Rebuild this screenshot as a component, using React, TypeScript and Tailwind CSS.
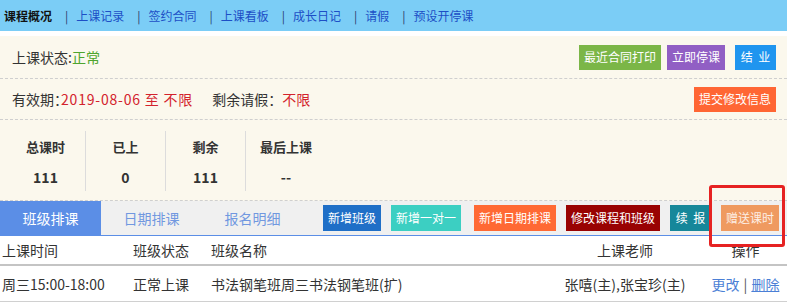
import React from 'react';

const navItems = ['上课记录', '签约合同', '上课看板', '成长日记', '请假', '预设开停课'];

const stats = [
    { label: '总课时', value: '111' },
    { label: '已上', value: '0' },
    { label: '剩余', value: '111' },
    { label: '最后上课', value: '--' },
];

export default function App() {
    return (
        <div className="relative w-[787px] h-[308px] bg-white overflow-hidden font-['Noto_Sans_CJK_SC',sans-serif] text-[14px] text-[#333]">
            {/* top nav */}
            <nav className="h-[31px] bg-[#7bcdf6] flex items-center pl-[4px] text-[12px] leading-none text-[#1d4fc6]">
                <span className="font-bold text-[#111]">课程概况</span>
                {navItems.map(item => (
                    <React.Fragment key={item}>
                        <span className="ml-[13px] mr-[8px] text-[#2b3a6b]">|</span>
                        <span>{item}</span>
                    </React.Fragment>
                ))}
            </nav>

            <div className="mt-[5px] bg-[#fbf8ed]">
                <div className="h-[43px] flex items-center justify-between pl-[12px] pr-[11px] border-b border-dashed border-[#cfcfcf]">
                    <div className="leading-none">
                        上课状态:<span className="text-[#4ea52e]">正常</span>
                    </div>
                    <div className="flex items-center text-[12px] text-white leading-none">
                        <span className="h-[25px] px-[5px] flex items-center bg-[#7bb647]">最近合同打印</span>
                        <span className="ml-[6px] h-[25px] px-[5px] flex items-center bg-[#915fc4]">立即停课</span>
                        <span className="ml-[10px] h-[25px] w-[41px] flex items-center justify-center bg-[#1f95ef]">结&nbsp;&nbsp;业</span>
                    </div>
                </div>

                <div className="h-[41px] flex items-center justify-between pl-[12px] pr-[11px] border-b border-dashed border-[#cfcfcf]">
                    <div className="leading-none">
                        有效期<span className="[font-feature-settings:'halt']">：</span>
                        <span className="text-[#d3222c] tracking-[0.8px]">2019-08-06 至 不限</span>
                        <span className="ml-[19px]">剩余请假：</span>
                        <span className="text-[#d3222c]">不限</span>
                    </div>
                    <span className="h-[25px] px-[5px] flex items-center bg-[#ff6634] text-[12px] text-white leading-none">提交修改信息</span>
                </div>

                <div className="h-[81px] flex pl-[6px] pt-[11px] border-b border-dashed border-[#cfcfcf]">
                    {stats.map((s, i) => (
                        <div
                            key={s.label}
                            className={i < 3 ? 'w-[80px] h-[60px] flex flex-col items-center border-r border-[#dcdcdc]' : 'w-[80px] h-[60px] flex flex-col items-center'}
                        >
                            <div className="mt-[6px] h-[20px] leading-[20px] text-[13px] font-bold">{s.label}</div>
                            <div className="mt-[10px] h-[20px] leading-[20px] text-[14px] font-bold">{s.value}</div>
                        </div>
                    ))}
                </div>
            </div>

            {/* tabs */}
            <div className="h-[35px] flex items-stretch bg-[#f0f0f0] border-b border-[#5b8ee6]">
                <div className="w-[101px] flex items-center justify-center bg-[#5b8ee6] text-white">班级排课</div>
                <div className="w-[101px] flex items-center justify-center text-[#7198e0]">日期排课</div>
                <div className="w-[101px] flex items-center justify-center text-[#7198e0]">报名明细</div>
                <div className="ml-[20px] flex items-center gap-[10px] text-[12px] text-white leading-none">
                    <span className="h-[26px] px-[5px] flex items-center bg-[#1f6fc7]">新增班级</span>
                    <span className="h-[26px] px-[5px] flex items-center bg-[#3ccfc2]">新增一对一</span>
                    <span className="ml-[3px] h-[26px] px-[5px] flex items-center bg-[#ff6934]">新增日期排课</span>
                    <span className="h-[26px] px-[5px] flex items-center bg-[#990202]">修改课程和班级</span>
                    <span className="h-[26px] w-[41px] flex items-center justify-center bg-[#16879a]">续&nbsp;&nbsp;报</span>
                    <span className="h-[26px] w-[58px] flex items-center justify-center bg-[#ef9a60] text-[#fdeee4]">赠送课时</span>
                </div>
            </div>

            {/* table */}
            <div className="grid grid-cols-[131px_78px_337px_158px_83px] h-[30px] items-center leading-none border-b-2 border-[#c4c4c4]">
                <div className="pl-[2px]">上课时间</div>
                <div className="pl-[2px]">班级状态</div>
                <div className="pl-[2px]">班级名称</div>
                <div className="text-center">上课老师</div>
                <div className="text-center">操作</div>
            </div>
            <div className="grid grid-cols-[131px_78px_337px_158px_83px] h-[36px] items-center leading-none border-b border-[#d0d0d0]">
                <div className="pl-[2px]">周三15:00-18:00</div>
                <div className="pl-[2px]">正常上课</div>
                <div className="pl-[2px]">书法钢笔班周三书法钢笔班(扩)</div>
                <div className="text-center">张嘻(主),张宝珍(主)</div>
                <div className="text-center">
                    <span className="text-[#4b7fd6]">更改</span>
                    <span className="mx-[4px] text-[#555]">|</span>
                    <span className="text-[#4b7fd6] underline">删除</span>
                </div>
            </div>

            {/* highlight box */}
            <div className="absolute left-[709px] top-[185px] w-[76px] h-[62px] border-[3px] border-[#e62222] rounded-[3px]" />
        </div>
    );
}
